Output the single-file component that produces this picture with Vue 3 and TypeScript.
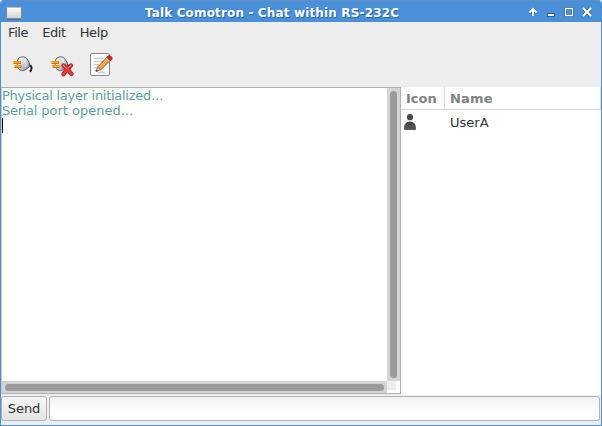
<script setup lang="ts">
import { ref } from 'vue'

interface Run {
  text: string
  tight: boolean
}

const menus: string[] = ['File', 'Edit', 'Help']
const messages: Run[][] = [
  [{ text: 'Physical layer initialized', tight: true }, { text: '...', tight: false }],
  [{ text: 'Serial', tight: true }, { text: ' port opened...', tight: false }],
]
const users: { name: string }[] = [{ name: 'UserA' }]
const tools: { label: string; kind: 'connect' | 'disconnect' | 'edit' }[] = [
  { label: 'Connect', kind: 'connect' },
  { label: 'Disconnect', kind: 'disconnect' },
  { label: 'Preferences', kind: 'edit' },
]
const draft = ref('')
</script>

<template>
  <div class="window">
    <header class="titlebar">
      <svg class="app-icon" width="16" height="14" viewBox="0 0 16 14">
        <defs>
          <linearGradient id="appFill" x1="0" y1="0" x2="0" y2="1">
            <stop offset="0" stop-color="#fff" />
            <stop offset="1" stop-color="#d3d3cc" />
          </linearGradient>
        </defs>
        <rect x=".5" y=".5" width="15" height="12" rx="1" fill="url(#appFill)" stroke="#7c8890" />
        <path d="M1 1.5h14" stroke="#a8c4dd" />
        <path d="M1 2.5h14" stroke="#fff" />
        <path d="M1 13.5h14" stroke="#3f76ad" />
      </svg>
      <h1 class="title">Talk Comotron - Chat within RS-232C</h1>
      <svg class="controls" width="68" height="15" viewBox="0 0 68 15">
        <g fill="none" stroke="#2d5f96" stroke-width="4" stroke-linejoin="round">
          <path d="M8 10.500V5M5.200 7.300L8 4.500l2.800 2.800" stroke-width="3.500" />
          <path d="M22 10h8" />
          <path d="M40.500 3.500h7v7h-7z" stroke-width="3" />
          <path d="M58.500 3.500l7 7M65.500 3.500l-7 7" stroke-width="3.600" />
        </g>
        <g fill="none" stroke="#fff" stroke-width="2">
          <path d="M8 11V4M4.500 7.500L8 4l3.500 3.500" />
          <path d="M23 10h6" />
          <path d="M40.500 3.500h7v7h-7z" stroke-width="1.300" />
          <path d="M58 3l8 8M66 3l-8 8" stroke-width="2.300" />
        </g>
      </svg>
    </header>

    <nav class="menubar">
      <span v-for="menu in menus" :key="menu" class="menu">{{ menu }}</span>
    </nav>

    <div class="toolbar">
      <button v-for="tool in tools" :key="tool.kind" class="tool" :aria-label="tool.label">
        <svg v-if="tool.kind !== 'edit'" width="24" height="24" viewBox="0 0 24 24">
          <defs>
            <linearGradient id="plugFill" x1="0" y1="0" x2="1" y2="1">
              <stop offset="0" stop-color="#fafafc" />
              <stop offset=".5" stop-color="#cfd1da" />
              <stop offset="1" stop-color="#747884" />
            </linearGradient>
          </defs>
          <g :transform="tool.kind === 'disconnect' ? 'translate(-1 0)' : undefined">
            <path d="M17.500 12.800c2-.8 3.300.6 3 2.700-.1 1.500-.7 2.500-1.800 3.200" fill="none" stroke="#1c1c1c" stroke-width="2" />
            <path d="M8 5c2.700-1.800 6.500-1.500 8 .8l2.200 3.800c1 1.900.8 3.400-.4 4.600l-3.200 2.500c-2.600 1.700-5.600 1.200-7.100-1.200C5.500 12.500 5.600 7.300 8 5z" fill="url(#plugFill)" stroke="#5c606b" />
            <path d="M13 6.500c1.700 1.800 2.400 4.800 1.300 7.500" fill="none" stroke="#fff" stroke-width="1.400" opacity=".6" />
            <path d="M2.500 9.500h7.500M3.500 13.500h7" stroke="#d97800" stroke-width="3" />
            <path d="M2.800 9h6.500M3.800 13h6" stroke="#ffb020" stroke-width="1.600" />
          </g>
          <g v-if="tool.kind === 'disconnect'" fill="none" stroke-linecap="round">
            <path d="M13.500 12.500c2.500 2 5.500 5.500 8 8.500M21 12.500c-3 2.300-5.500 5-7.500 8.800" stroke="#b51f1f" stroke-width="4.200" />
            <path d="M13.500 12.500c2.500 2 5.500 5.500 8 8.500M21 12.500c-3 2.300-5.500 5-7.500 8.800" stroke="#e93a3a" stroke-width="2.600" />
            <path d="M13.200 12.300l3 2.800M21 12.300l-2.500 2.200" stroke="#f49a9a" stroke-width="1" />
          </g>
        </svg>
        <svg v-else width="24" height="24" viewBox="0 0 24 24">
          <rect x="1.500" y=".5" width="19" height="22" rx="1.500" fill="#fafafa" stroke="#888a85" />
          <path d="M5 5.500h10M5 8.500h9M5 11.500h7M5 14.500h4M5 17.500h3" stroke="#c8c8c8" />
          <path d="M9 19.500h7" stroke="#cecece" stroke-width="2" />
          <path d="M8.500 14.200L17.500 4.800l3.200 3.200-9.200 9z" fill="#f1a044" stroke="#9a5a13" stroke-width=".9" />
          <path d="M10 14.300l8.200-8.400" stroke="#ffc873" />
          <path d="M7 18.500l1.500-4.300 2.800 2.600z" fill="#e9d4b1" stroke="#745a39" stroke-width=".6" />
          <path d="M6.800 18.800l.8-2.200 1.400 1.300z" fill="#222" />
          <path d="M16.700 5.600l1.300-1.300 3 3-1.300 1.300z" fill="#ddd" stroke="#777" stroke-width=".5" />
          <path d="M17.800 4.200c.8-2.300 5.300-1.700 5.300 1.200 0 1.200-.9 1.900-1.900 2.300z" fill="#d62828" stroke="#9c1111" stroke-width=".8" />
        </svg>
      </button>
    </div>

    <main class="content">
      <section class="log">
        <div class="log-text">
          <p v-for="(line, i) in messages" :key="i" class="line"><span v-for="run in line" :key="run.text" :class="{ tight: run.tight }">{{ run.text }}</span></p>
          <p class="line"><span class="caret"></span></p>
        </div>
        <div class="vbar"><span class="thumb"></span></div>
        <div class="hbar"><span class="thumb"></span></div>
        <div class="corner"></div>
      </section>

      <section class="users">
        <div class="users-head">
          <span class="col-icon">Icon</span>
          <span class="col-name">Name</span>
        </div>
        <div v-for="user in users" :key="user.name" class="user">
          <svg class="avatar" width="12" height="16" viewBox="0 0 12 16">
            <defs>
              <linearGradient id="personFill" x1="0" y1="0" x2="0" y2="1">
                <stop offset="0" stop-color="#444" />
                <stop offset="1" stop-color="#5a5a5a" />
              </linearGradient>
            </defs>
            <circle cx="6" cy="3.200" r="3.100" fill="#484848" />
            <path d="M0 14.500C0 10.500 2.200 7.500 6 7.500s6 3 6 7c0 1-.5 1.500-1.500 1.500h-9C.5 16 0 15.500 0 14.500z" fill="url(#personFill)" />
          </svg>
          <span>{{ user.name }}</span>
        </div>
      </section>
    </main>

    <form class="composer" @submit.prevent="draft = ''">
      <button class="send">Send</button>
      <input v-model="draft" class="entry" type="text" />
    </form>
  </div>
</template>

<style>
body {
  margin: 0;
  background: #fff;
}
</style>

<style scoped>
.window {
  box-sizing: border-box;
  width: 602px;
  height: 426px;
  display: flex;
  flex-direction: column;
  border: 1px solid #4a90d9;
  border-top: 0;
  border-radius: 4px 4px 0 0;
  overflow: hidden;
  background: #ededed;
  color: #2e3436;
  font: 13px/15px "DejaVu Sans", sans-serif;
}
.titlebar {
  flex: none;
  box-sizing: border-box;
  height: 22px;
  display: flex;
  align-items: center;
  padding: 2px 8px 0 5px;
  background: #4a90d9;
  border-top: 1px solid #5a8fc8;
}
.title {
  flex: 1;
  margin: 0;
  padding-right: 3px;
  text-align: center;
  font-size: 12px;
  line-height: 18px;
  font-weight: bold;
  letter-spacing: 0.15px;
  color: #fff;
  text-shadow: 1px 1px 0 #2d629c;
}
.menubar {
  flex: none;
  height: 21px;
  display: flex;
  gap: 14px;
  padding-left: 7px;
  line-height: 21px;
  letter-spacing: -0.4px;
}
.toolbar {
  flex: none;
  height: 44px;
  display: flex;
  align-items: center;
  gap: 15px;
  padding-left: 10px;
}
.tool {
  display: flex;
  padding: 0;
  border: 0;
  background: none;
}
.content {
  flex: none;
  height: 308px;
  display: grid;
  grid-template-columns: 400px 200px;
}
.log {
  box-sizing: border-box;
  height: 307px;
  display: grid;
  grid-template-columns: 1fr 13px;
  grid-template-rows: 1fr 12px;
  border: 1px solid #b0b0b0;
  border-left-color: #c9c9c9;
  background: #fff;
}
.log-text {
  color: #5f9ea0;
}
.line {
  height: 15px;
  margin: 0;
  white-space: pre;
}
.tight {
  letter-spacing: -0.28px;
}
.caret {
  display: block;
  width: 1px;
  height: 15px;
  background: #000;
}
.vbar,
.hbar {
  display: flex;
  background: #d4d4d4;
}
.vbar {
  padding: 3px;
}
.hbar {
  padding: 3px 3px 2px;
}
.thumb {
  flex: 1;
  border-radius: 4px;
  background: #999b9c;
}
.corner {
  margin: 0 4px 3px 0;
  background: #ededed;
}
.users {
  background: #fff;
}
.users-head {
  box-sizing: border-box;
  height: 23px;
  display: flex;
  line-height: 23px;
  font-weight: bold;
  color: #7f8283;
  border-bottom: 1px solid #d4d4d4;
}
.col-icon {
  box-sizing: border-box;
  width: 44px;
  padding-left: 5px;
  border-right: 1px solid #dcdcdc;
}
.col-name {
  flex: 1;
  padding-left: 5px;
  letter-spacing: 0.2px;
  border-right: 1px solid #dcdcdc;
}
.user {
  height: 25px;
  display: flex;
  align-items: center;
  gap: 34px;
  padding-left: 3px;
}
.avatar {
  align-self: flex-start;
  margin-top: 4px;
}
.composer {
  flex: 1;
  display: flex;
  gap: 2px;
  padding: 1px 1px 4px 0;
}
.send,
.entry {
  box-sizing: border-box;
  height: 25px;
  border: 1px solid #b3b3b3;
  border-radius: 3px;
  font: inherit;
  color: inherit;
}
.send {
  width: 46px;
  padding: 0;
  background: linear-gradient(#f6f6f6, #e4e4e4);
}
.entry {
  flex: 1;
  min-width: 0;
  background: linear-gradient(#f1f1f1, #fff 70%);
}
</style>
